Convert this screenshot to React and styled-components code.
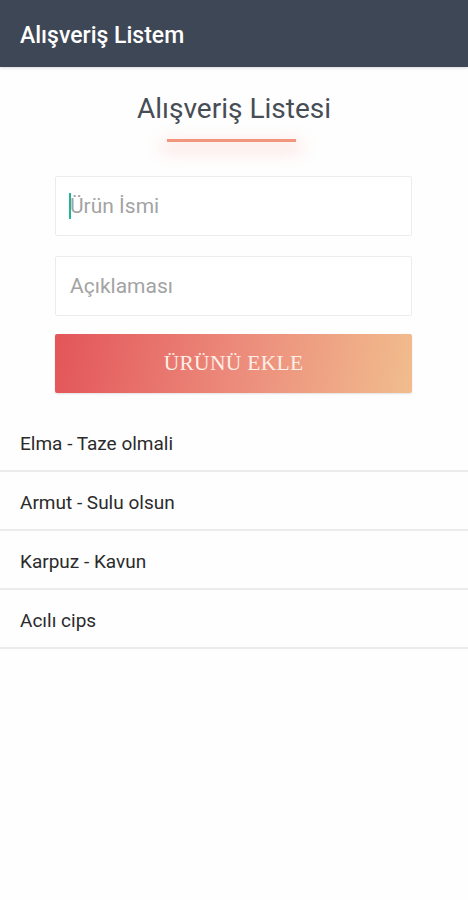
import React from "react";
import styled, { createGlobalStyle } from "styled-components";

const GlobalStyle = createGlobalStyle`
  body {
    margin: 0;
    background: #fefefe;
    font-family: Roboto, "Noto Sans", sans-serif;
  }
`;

const Page = styled.div`
  width: 468px;
  min-height: 900px;
  background: #fefefe;
`;

const AppBar = styled.header`
  height: 67px;
  background: #3e4756;
  display: flex;
  align-items: center;
  padding: 0 20px;
  box-shadow: 0 1px 3px rgba(0, 0, 0, 0.15);
`;

const AppTitle = styled.h1`
  margin: 4px 0 0;
  color: #ffffff;
  font-family: Roboto, sans-serif;
  font-size: 23px;
  font-weight: 500;
`;

const PageHead = styled.div`
  display: flex;
  flex-direction: column;
  align-items: center;
  padding-top: 24px;
`;

const PageTitle = styled.h2`
  margin: 0;
  color: #474d55;
  font-family: Roboto, sans-serif;
  font-size: 28px;
  font-weight: 400;
  line-height: 36px;
`;

const Underline = styled.div`
  width: 129px;
  height: 3px;
  margin: 12px 5px 0 0;
  background: #f2957d;
  box-shadow: 0 6px 16px 6px rgba(242, 149, 125, 0.18);
`;

const Form = styled.div`
  display: flex;
  flex-direction: column;
  gap: 20px;
  padding: 34px 56px 0 55px;
`;

const FieldWrap = styled.div`
  position: relative;
`;

const Caret = styled.span`
  position: absolute;
  left: 14px;
  top: 17px;
  width: 2px;
  height: 26px;
  background: #1fb59a;
`;

const Field = styled.input`
  box-sizing: border-box;
  display: block;
  height: 60px;
  width: 100%;
  border: 1px solid #ececec;
  border-radius: 2px;
  background: #ffffff;
  padding: 0 14px;
  font-family: Roboto, sans-serif;
  font-size: 21px;
  color: #333;
  outline: none;

  &::placeholder {
    color: #a3a3a3;
  }
`;

const AddButton = styled.button`
  height: 59px;
  margin-top: -2px;
  border: none;
  border-radius: 2px;
  background: linear-gradient(100deg, #e35559 0%, #ec8a7b 50%, #f1bd8d 100%);
  color: #fdeee6;
  font-family: "Liberation Serif", "DejaVu Serif", serif;
  font-size: 21.5px;
  letter-spacing: 0.3px;
  box-shadow: 0 1px 2px rgba(0, 0, 0, 0.12);
`;

const List = styled.ul`
  list-style: none;
  margin: 20px 0 0;
  padding: 0;
`;

const Item = styled.li`
  box-sizing: border-box;
  height: 59px;
  display: flex;
  align-items: center;
  padding: 3px 20px 0;
  border-bottom: 2px solid #ebebeb;
  color: #2b2b2b;
  font-family: Roboto, sans-serif;
  font-size: 19px;
`;

const items = [
  "Elma - Taze olmali",
  "Armut - Sulu olsun",
  "Karpuz - Kavun",
  "Acılı cips",
];

export default function App() {
  return (
    <Page>
      <GlobalStyle />
      <AppBar>
        <AppTitle>Alışveriş Listem</AppTitle>
      </AppBar>
      <PageHead>
        <PageTitle>Alışveriş Listesi</PageTitle>
        <Underline />
      </PageHead>
      <Form>
        <FieldWrap>
          <Field placeholder="Ürün İsmi" />
          <Caret />
        </FieldWrap>
        <Field placeholder="Açıklaması" />
        <AddButton>ÜRÜNÜ EKLE</AddButton>
      </Form>
      <List>
        {items.map((item) => (
          <Item key={item}>{item}</Item>
        ))}
      </List>
    </Page>
  );
}
